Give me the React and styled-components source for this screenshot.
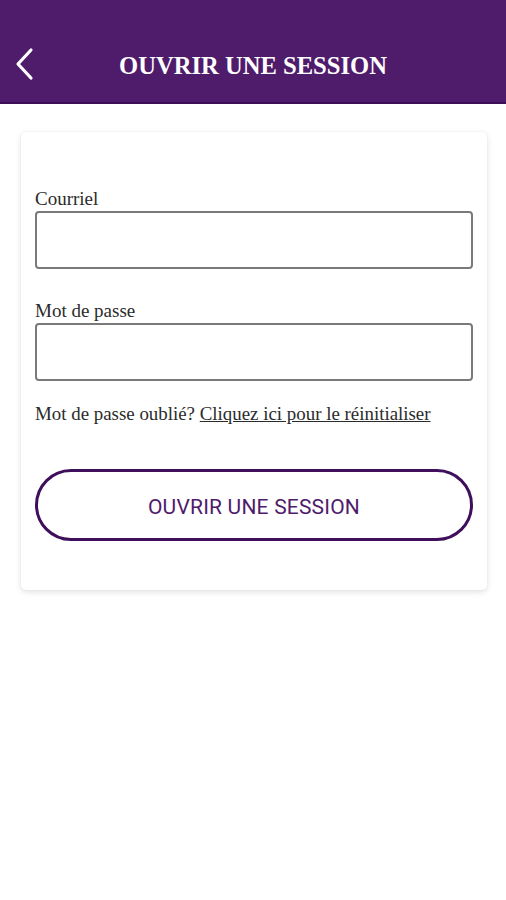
import React from "react";
import styled, { createGlobalStyle } from "styled-components";

const Global = createGlobalStyle`
  html, body { margin: 0; padding: 0; background: #ffffff; }
  * { box-sizing: border-box; }
`;

const Page = styled.div`
  width: 506px;
  min-height: 900px;
  background: #ffffff;
`;

const Header = styled.header`
  height: 104px;
  background: #4f1b6b;
  border-bottom: 2px solid #3b0e56;
  padding-top: 30px;
  display: flex;
  align-items: center;
  justify-content: center;
  position: relative;
`;

const Back = styled.button`
  position: absolute;
  left: 9px;
  top: 44px;
  width: 30px;
  height: 40px;
  background: none;
  border: 0;
  padding: 0;
  display: flex;
  align-items: center;
  justify-content: center;
`;

const Title = styled.h1`
  margin: 0;
  font-family: "Liberation Serif", "Times New Roman", serif;
  font-weight: bold;
  font-size: 24.6px;
  color: #ffffff;
`;

const Card = styled.main`
  margin: 28px 19px 0 21px;
  background: #ffffff;
  border-radius: 5px;
  box-shadow: 0 2px 6px rgba(0, 0, 0, 0.12), 0 0 2px rgba(0, 0, 0, 0.06);
  padding: 57px 14px 49px 14px;
  display: flex;
  flex-direction: column;
`;

const Label = styled.label`
  font-family: "Liberation Serif", "Times New Roman", serif;
  font-size: 19px;
  line-height: 20px;
  margin-bottom: 2px;
  color: #2b2b2b;
`;

const Input = styled.input`
  height: 58px;
  width: 100%;
  border: 2px solid #7a7a7a;
  border-radius: 4px;
  background: #fff;
  margin-bottom: ${(p) => p.$mb || 0}px;
  font-size: 18px;
  padding: 0 10px;
`;

const Forgot = styled.p`
  margin: 22px 0 0 0;
  font-family: "Liberation Serif", "Times New Roman", serif;
  font-size: 18.9px;
  line-height: 22px;
  color: #2b2b2b;
`;

const Link = styled.a`
  color: #2b2b2b;
  text-decoration: underline;
`;

const Submit = styled.button`
  margin-top: 44px;
  height: 72px;
  width: 100%;
  border: 3px solid #3f0f5c;
  border-radius: 36px;
  background: #ffffff;
  padding-top: 4px;
  font-family: Roboto, "Liberation Sans", sans-serif;
  font-size: 21px;
  letter-spacing: 0.2px;
  color: #4f1b6b;
`;

export default function App() {
  return (
    <Page>
      <Global />
      <Header>
        <Back aria-label="Retour">
          <svg width="22" height="34" viewBox="0 0 22 34">
            <path d="M18 3 L5 17 L18 31" fill="none" stroke="#ffffff" strokeWidth="3.2" strokeLinecap="round" strokeLinejoin="round" />
          </svg>
        </Back>
        <Title>OUVRIR UNE SESSION</Title>
      </Header>
      <Card>
        <Label>Courriel</Label>
        <Input type="email" $mb={32} />
        <Label>Mot de passe</Label>
        <Input type="password" />
        <Forgot>
          Mot de passe oublié? <Link>Cliquez ici pour le réinitialiser</Link>
        </Forgot>
        <Submit>OUVRIR UNE SESSION</Submit>
      </Card>
    </Page>
  );
}
